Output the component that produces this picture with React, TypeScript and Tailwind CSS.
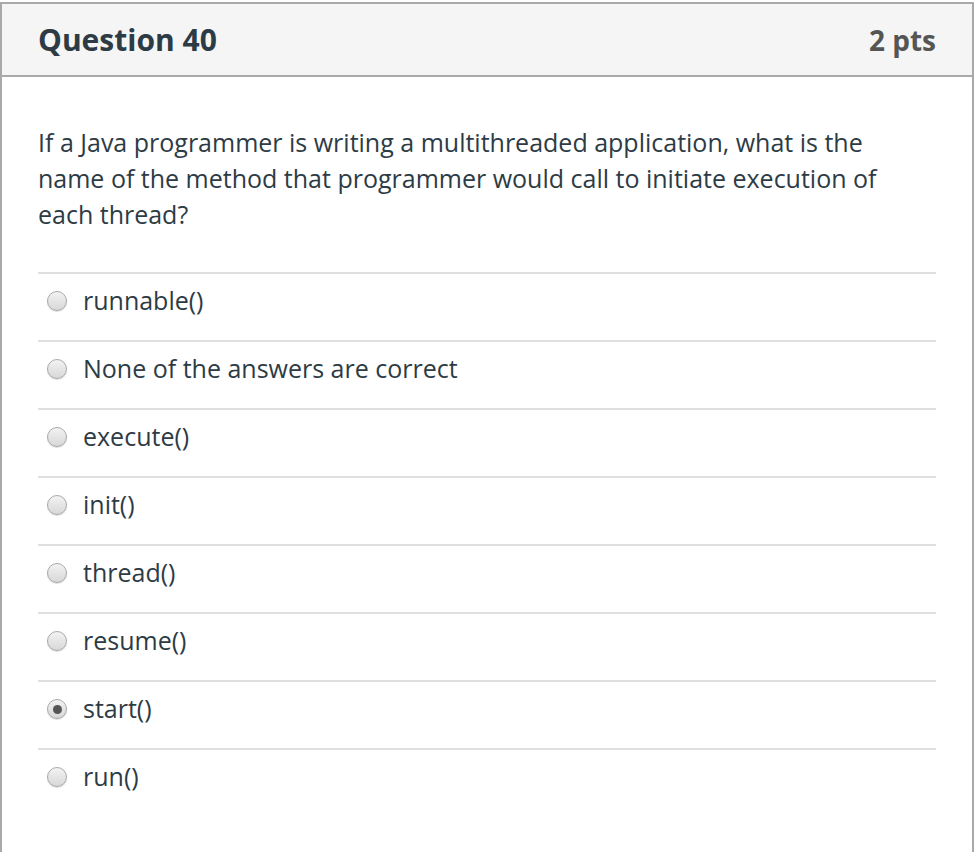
import React from 'react';

const answers = [
  'runnable()',
  'None of the answers are correct',
  'execute()',
  'init()',
  'thread()',
  'resume()',
  'start()',
  'run()',
];

const Radio = ({ checked }: { checked?: boolean }) => (
  <span className="relative flex h-[20px] w-[20px] shrink-0 items-center justify-center rounded-full border border-[#a9a9a9] bg-gradient-to-b from-[#f2f2f2] to-[#d8d8d8] shadow-[0_1px_1px_rgba(0,0,0,0.15)]">
    {checked && <span className="h-[9px] w-[9px] rounded-full bg-[#555]" />}
  </span>
);

export default function App() {
  return (
    <div
      className="h-[852px] w-[974px] bg-white"
      style={{ fontFamily: '"Open Sans", "Liberation Sans", sans-serif' }}
    >
      <div className="mt-[2px] h-[850px] border-x-2 border-t-2 border-[#a9a9a9]">
        <div className="flex h-[73px] items-center justify-between border-b-2 border-[#a9a9a9] bg-[#f5f5f5] px-[36px]">
          <h2 className="text-[30px] font-bold text-[#2d3b45]">Question 40</h2>
          <span className="text-[28px] font-bold text-[#555]">2 pts</span>
        </div>
        <div className="px-[36px] pt-[47px]">
          <p className="whitespace-nowrap text-[25px] leading-[36px] text-[#2d3b45]">
            If a Java programmer is writing a multithreaded application, what is the
            <br />
            name of the method that programmer would call to initiate execution of
            <br />
            each thread?
          </p>
          <div className="mt-[40px]">
            {answers.map((a) => (
              <div
                key={a}
                className="flex h-[68px] items-center gap-[16px] border-t-2 border-[#e0e0e0] pb-[12px] pl-[9px]"
              >
                <Radio checked={a === 'start()'} />
                <span className="text-[25px] text-[#2d3b45]">{a}</span>
              </div>
            ))}
          </div>
        </div>
      </div>
    </div>
  );
}
